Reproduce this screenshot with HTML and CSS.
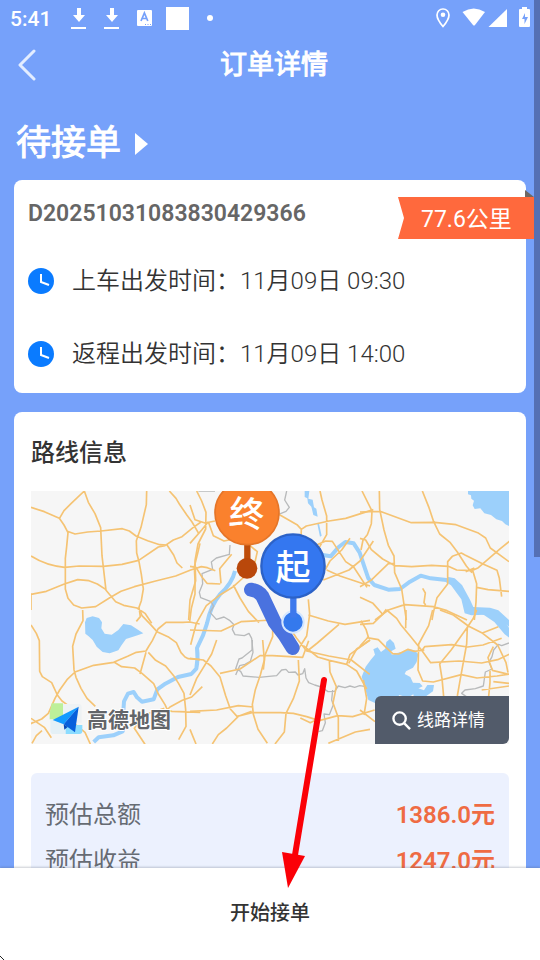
FILE: index.html
```html
<!DOCTYPE html>
<html lang="zh-CN">
<head>
<meta charset="utf-8">
<meta name="viewport" content="width=device-width, initial-scale=1">
<title>订单详情</title>
<link rel="stylesheet" href="styles.css">
</head>
<body>
<div class="app">
  <div class="status-bar">
    <span class="clock">5:41</span>
    <svg class="status-left" viewBox="0 0 146 24" aria-hidden="true">
      <g fill="#fff">
        <path d="M7 1h4v7h4l-6 7-6-7h4zM1 20h15v2H1z"/>
        <path d="M40 1h4v7h4l-6 7-6-7h4zM34 20h15v2H34z"/>
        <rect x="67" y="3" width="15" height="16" rx="1"/>
        <rect x="96" y="0" width="23" height="23"/>
        <circle cx="140" cy="11" r="3"/>
      </g>
      <path d="M71 14l3.400-8 3.400 8M72.300 11.500h4.300" fill="none" stroke="#76a1fa" stroke-width="1.700"/>
      <path d="M75 17.500h1M77.500 17.500h1M80 17.500h1" stroke="#76a1fa"/>
    </svg>
    <svg class="status-right" viewBox="0 0 96 24" aria-hidden="true">
      <path d="M9 2a5.900 5.900 0 0 0-6 6c0 4.500 6 11.500 6 11.500S15 12.500 15 8a5.900 5.900 0 0 0-6-6z" fill="none" stroke="#fff" stroke-width="1.700"/>
      <circle cx="9" cy="7.700" r="2.300" fill="#fff"/>
      <path d="M28.500 5Q39.800-2 51 5L41 18q-1 1-2 0z" fill="#fff"/>
      <path d="M54.500 20L73 2v18z" fill="#fff"/>
      <path d="M88 0h5v2h2q1 0 1 1v16q0 1-1 1H86q-1 0-1-1V3q0-1 1-1h2z" fill="#fff"/>
      <path d="M91 6l-3 6h2.500v5l3.500-7h-3z" fill="#76a1fa"/>
    </svg>
  </div>

  <header class="nav">
    <button class="back" type="button" aria-label="返回">
      <svg viewBox="0 0 20 34" aria-hidden="true"><path d="M18 3L4 17l14 14" fill="none" stroke="#e3edff" stroke-width="3" stroke-linecap="round" stroke-linejoin="round"/></svg>
    </button>
    <h1>订单详情</h1>
  </header>

  <main class="content">
    <h2 class="state">待接单<svg viewBox="0 0 13 22" aria-hidden="true"><path d="M0 0l13 11L0 22z" fill="#fff"/></svg></h2>

    <section class="card order">
      <p class="order-id">D20251031083830429366</p>
      <div class="ribbon">
        <svg viewBox="0 0 136 50" preserveAspectRatio="none" aria-hidden="true">
          <path d="M127 1l9 7h-9z" fill="#6f6864"/>
          <path d="M0 8h136v42H0l6-21z" fill="#ff693d"/>
        </svg>
        <span>77.6公里</span>
      </div>
      <p class="time"><svg viewBox="0 0 26 26" aria-hidden="true"><circle cx="13" cy="13" r="13" fill="#0a7bff"/><path d="M13 6v8l8 3" fill="none" stroke="#fff" stroke-width="2"/></svg>上车出发时间：11月09日 09:30</p>
      <p class="time"><svg viewBox="0 0 26 26" aria-hidden="true"><circle cx="13" cy="13" r="13" fill="#0a7bff"/><path d="M13 6v8l8 3" fill="none" stroke="#fff" stroke-width="2"/></svg>返程出发时间：11月09日 14:00</p>
    </section>

    <section class="card route">
      <h3>路线信息</h3>
      <div class="map">
        <svg class="map-canvas" viewBox="0 0 1434 759" role="img" aria-label="路线地图">
          <rect width="1434" height="759" fill="#f6f6f6"/>
          <!-- lakes and rivers -->
          <g fill="#9cd0fb">
            <g transform="translate(987 -33)">
              <path d="M324 33h126v106l-14-6-10-10-17-5-16-13-20-5-12-15-17 2-6-11 4-14-8-6-1-10-9-3z"/>
              <path d="M262 290l22 5 22 20 24 44 10 22 50 2 25 8 35 32v20l-42-34-34-5-40 2-20-6-10-42-31-42-16-10z"/>
            </g>
            <g transform="translate(987 357)">
              <path d="M5 200l12-30 15-20 13-16-5-16 13-6 10 14 13-10 3-20 11-9 12 12 5 17-16 9 5 9 18-6 21-4 12-6 17 3 11 12-5 23-11 17-21 11-4 8 17 9 8 17 20 1 9 10-12 6-8 12-15 10-15 4-20-6-10 13 13 11H45L25 270z"/>
              <path d="M159 250l14-16 19 7 10-16 20 0-3 19-20 14h-38zM340 0h65l23 25 20 30v28l-14-10-31-37-30-20z"/>
            </g>
            <path transform="translate(-33 357)" d="M195 37l5-13 18-5 19 5 9 13-2 18 10 16 21 3 20-14 15-18 23 4 37 24-17 6-35 11-13 18-10 16-17 6-9 3-21-4-18-16-12-20-13-12-9-7z"/>
            <path transform="translate(477 -33)" d="M344 33h14l-3 23 13 3 4 23 7 4 4 24-13-5-6-25-10-10-2-15-8-4zM382 132l5-1 8 36-5 3z"/>
          </g>
          <g fill="none" stroke="#9cd0fb" stroke-width="12" stroke-linejoin="round">
            <path d="M612 240q-9 38-45 70-27 31-39 87l-12 36-18 38q4 30-2 62l-15 16-40 9-38 20-24 17-11 30-35 7-15-13-10-16-17 5-12 23-2 30 4 31-6 29-28 12-44 6-15 14"/>
            <path d="M875 192l24 4 24-28 20-15 25 4 18 28 14 42 12 35 18 20 42 14 35-2 30-22 32-18 30 8 54 6"/>
          </g>
          <!-- administrative boundaries -->
          <g fill="none" stroke="#b8babb" stroke-width="4" stroke-linejoin="round">
            <path transform="translate(477 -33)" d="M120 195l-2 28-39 11-15 12 4 22-32 13 2 30-10 26 4 16 31 12 8 14-11 18 19 21 23-7 18 11 12 12-5 14 8 16 28 3 14-7 8 15 4 42-8 27-16 9-16 4-12 28M290 33l-6 27 14 22-10 12-22 9M25 33h50"/>
            <path transform="translate(477 447)" d="M187 0l-1 30-30 24-9 3-10 29 15 8 7 14 48 4 53-5 15-17 13-2 8 9 20-1 8 9 14-4 6-15 4 28 8 14 18 7 20 6 20 14 20-1 11-16 20 5 15-5 14 4 15-5 15 2M428 150l-3 30 5 14-12 30-16-2 4 26-9 24-12 3"/>
            <path transform="translate(987 357)" d="M447 99l-22 8-10-4-14 17-5 20-9 17 9 20-20 9-6 42-24 8-31 4-10 10 14 10"/>
          </g>
          <!-- highways -->
          <g fill="none" stroke="#f5c373" stroke-width="5" stroke-linejoin="round">
            <g transform="translate(-33 -33)">
              <path d="M33 82l40 13 45 20 14 20 12 23-4 42-4 35v92l8 28 17 20 24 9 42-4 41-26 35-20 40-14 64-17 60-15 45-18 32-10 18 3 24 9M33 228q46 29 101 34l43-4 73 1 56-6 50-12 59-40 20-4 25-17 26-10 33-27 24-17M193 33l-40 38-21 21-14 24M193 33l12 34 20 34 17 42 4 84 12 104 29 34 24 11 40 8 24 16 20 30M380 33l-1 41-16 68-14 40 1 37 7 26 7 38 6 44-6 35-7 20 4 28-12 14M448 33l20 22 10 17 23 34 15 20 20 34M142 154l23 8 38-6 40-3 64-7 21 7 20 15 35 14 36 12 22 1 20 30 10 24 16 15M33 343l46-9 54-22 40-13 34 3 25 10 26 17M33 340v50M540 190l-7 30-10 40 2 42v40l-11 43-5 40"/>
            </g>
            <g transform="translate(-33 357)">
              <path d="M33 45l16 25 9 22 1 92 8 16 28 18 17 37 14 18 15 11M188 0l1 32-21 40-10 37 4 70 6 23 15 33 18 30 25 24M165 186l-24 23-22 31-14 25-20 45-20 17-33 14M33 325l40 27 21 31M66 362l-17 15-13 23M165 186l56-20 60-9 42-18 26-12 29-4 7-12 12-19 17-35 24-20 50 0 21-1 30 6M360 0l6 17 26 27 19 21 36 17 22 16 14 30 12 13 10 5 35 3M283 157l22 13 39 4 22 16 35 31 14 31 20 32 8 17 13 3 85 3M385 127l22 24 30 17 24 29 15 24 16 29 5 49 1 50-22 40M430 310l20-19 37-20 28-10 32-31M378 127l-18 65M120 330l47 14 28 23 16 35M375 403l-32-48 15-20 30-25 45-15"/>
            </g>
            <g transform="translate(477 -33)">
              <path d="M0 75l15 44 30 10 30-6M20 33l15 30 13 34-1 50-23 45-9 50 2 60-17 58-4 60M0 190l35-40 20-25M55 125l15 42 32 16 49-10 51 42-10 45-30 31-32 29-39 24-42 33-30 53-17 64M0 259l18 3 17 28 16 20 40 2M93 310l-4-44 36-43M130 315l20 39 25 40 32 34M266 103l55 31 13 14 15-10 68-15 50-8 83-26M390 33l6 27 14 48 0 56-19 33-33 42M334 148l-1 26 45 22 29-13 20 1 40 61 24 16 40 61M480 175l-25 35-35 33-14 26M400 300l77-30 33-27 40-60M355 358l4 45-9 65-35 55M410 270l40 18 90 30M355 405l60 18 50 10 75-12M447 433l-65 56-30 24M540 480l-40 27-24 43M0 450l93 3 60-28 95-5 42 10 30 45 30 38 66 15 68 12 55 43M248 420l0 50-23 55-5 44"/>
            </g>
            <g transform="translate(477 447)">
              <path d="M80 0L65 42 20 115 0 165M0 55l40 5 23 18 27 33 17 56 14 40 20 22 45-11 85 0 39 2 40 10 38 12 55-15 45 3 66-20M218 0l5 60-12 45-15 44-9 44 3 30 14 45 28 42M90 100l60-13 60-40 38 0 90 5 18-50M325 60l3 63-18 53-22 44-5 56-28 36M0 214l80-4 65-13 45 4M185 214l-40 15-35 35-25 20-18 28M340 17l43 34 35 10 52 12 30 20 30 54M418 61l2 35 19 44-10 49 16 44 0 70M470 73l10-30 60-43M540 268l-44 8-45 19-36 15M0 268l18 44M373 242l-12 6-30-14"/>
            </g>
            <g transform="translate(987 -33)">
              <path d="M0 96l60-2 94 34 70-1 64 7 65 24 24 16 14 30 56 41M58 33l1 55 13 62 13 46 17 32 2 50 21 49 14 93M6 33l30 60-2 38-12 33-13 16-6 30M0 175l17 5 17 29 34 28 37 20 50 3 60-4 50 3 25 11 45 2 20-9 66-57 41-33M187 33l20 50 14 42 18 37 32 26 21 28 27 42 17 20M317 275l26-11M263 262v-17l14-16 27-10 11 6 54 27 42 19 7 24 7 55M105 251l-20 0-52 50L0 320M337 268l13 43-2 55-5 54M350 322l34 7 63 5M0 352l39 18 31 35M45 420l40-30 49-16 86 6 41 12 60 28M263 262l0 50-32 41-11 45-4 22M188 325l8 14-4 29 5 7"/>
            </g>
            <g transform="translate(987 357)">
              <path d="M0 43l40-3 27-26 12-16M0 108l25-27-7-23-15-26M20 83l35 6 23 23 20 19 18 1 28-14 19 6 30-4M80 0l30 25 13 20 30 36 32 40 27 37 85-5 68 6 48-10 43-20M138 0l-1 55M218 0l-12 47-30 55-2 78 14 33 32 3 84-22 47 10 60-6 52-8M187 120l7-10 81-6 48 7 46-6 56-20M240 0l40 15 45 33 43 22 45 35 25 53 6 30M350 0l-10 25-20 30-46 64-35 43 7 43 5 55M322 50l-2 52-20 110-8 46M365 70l50-20M390 182v35l-4 42M365 240l82-12M400 110l-16 33 13 38 50 12M0 300l45 35M10 210l10 55-8 50M400 215l47 5"/>
            </g>
          </g>
          <!-- planned route -->
          <path d="M660 296q24 4 34 20l37 78 30 39 24 38" fill="none" stroke="#4a72df" stroke-width="42" stroke-linecap="round" stroke-linejoin="round"/>
          <!-- destination pin -->
          <g>
            <path d="M649 155v65" stroke="#be4d0b" stroke-width="19"/>
            <circle cx="648" cy="232" r="31" fill="#b9480b"/>
            <circle cx="648" cy="65" r="96" fill="#fa812d" stroke="#e57528" stroke-width="5"/>
            <text class="pin-text" x="648" y="106" transform="rotate(5 648 65)">终</text>
          </g>
          <!-- departure pin -->
          <g>
            <circle cx="786" cy="393" r="32" fill="#3479ed" stroke="#d5e7ff" stroke-width="6"/>
            <path d="M787 310v70" stroke="#3d78ec" stroke-width="19"/>
            <circle cx="786" cy="225" r="95" fill="#3477f0" stroke="#2c62c7" stroke-width="7"/>
            <text class="pin-text" x="786" y="267">起</text>
          </g>
          <!-- map provider mark -->
          <path d="M62 637h34v48H56v-18z" fill="#bdf09a"/>
          <path d="M96 639h46q10 0 10 10v46H96z" fill="#eef2f4"/>
          <path d="M58 687h46v42H68q-10 0-10-10z" fill="#e4f0f6"/>
          <path d="M104 702h50v18q0 9-9 9h-41z" fill="#8bdcff"/>
          <path d="M143 647L65 687l33 13z" fill="#149bff"/>
          <path d="M143 647L98 700l34 24z" fill="#075fdc"/>
          <path d="M98 700l2 16 10-8z" fill="#0748b6"/>
          <text class="map-brand" x="168" y="707">高德地图</text>
        </svg>
        <button class="map-detail" type="button"><svg viewBox="0 0 20 20" aria-hidden="true"><circle cx="8" cy="8" r="6.500" fill="none" stroke="#fff" stroke-width="2.500"/><path d="M13 13l6 6" stroke="#fff" stroke-width="2.500"/></svg>线路详情</button>
      </div>

      <dl class="fees">
        <div><dt>预估总额</dt><dd>1386.0元</dd></div>
        <div><dt>预估收益</dt><dd>1247.0元</dd></div>
      </dl>
    </section>
  </main>

  <footer class="action-bar">
    <button class="accept" type="button">开始接单</button>
    <svg class="arrow" viewBox="0 0 46 214" aria-hidden="true">
      <path d="M43 5L14 180" stroke="#fb0007" stroke-width="6" stroke-linecap="round"/>
      <path d="M1 177l23 4L7 213z" fill="#fb0007"/>
    </svg>
    <svg class="corner" viewBox="0 0 4 4" aria-hidden="true"><path d="M0 0h1v1H0zM1 1h1v1H1zM2 2h1v1H2zM3 3h1v1H3z" fill="#222"/></svg>
  </footer>
  <div class="scroll-thumb"></div>
</div>
</body>
</html>
```

FILE: styles.css
```css
* { box-sizing: border-box; }

body, h1, h2, h3, p, dl, dd { margin: 0; }

body {
  font-family: Roboto, "Noto Sans CJK SC", sans-serif;
  color: #333;
  background: #76a1fa;
}

button {
  padding: 0;
  border: 0;
  background: none;
  font-family: inherit;
  color: inherit;
}

svg { display: block; flex: none; }

.app {
  position: relative;
  display: flex;
  flex-direction: column;
  height: 100vh;
  overflow: hidden;
}

.status-bar {
  display: flex;
  align-items: center;
  height: 38px;
  padding: 0 10px;
  color: #fff;
}
.clock { width: 60px; font-size: 21px; line-height: 24px; font-weight: 500; }
.status-left { width: 146px; height: 24px; }
.status-right { width: 96px; height: 24px; margin-left: auto; }

.nav {
  display: grid;
  grid-template-columns: 40px 1fr 32px;
  align-items: center;
  height: 54px;
  padding: 0 16px;
  color: #fff;
}
.back svg { width: 20px; height: 34px; }
.nav h1 {
  font-size: 27px;
  line-height: 36px;
  font-weight: 400;
  text-align: center;
  -webkit-text-stroke: 1px #fff;
}

.content {
  flex: 1;
  min-height: 0;
  overflow: hidden;
  padding: 28px 14px 0;
}

.state {
  display: flex;
  align-items: center;
  gap: 14px;
  padding: 0 2px;
  margin-bottom: 12px;
  font-size: 35px;
  line-height: 48px;
  font-weight: 400;
  color: #fff;
  -webkit-text-stroke: 1px #fff;
}
.state svg { width: 13px; height: 22px; }

.card {
  position: relative;
  border-radius: 8px;
  background: #fff;
}

.order {
  display: flex;
  flex-direction: column;
  gap: 41px;
  padding: 18px 14px 23px;
  margin-bottom: 19px;
}
.order-id { font-size: 23px; line-height: 32px; font-weight: 600; color: #666; margin-bottom: -6px; }
.time {
  display: flex;
  align-items: center;
  gap: 18px;
  font-size: 24px;
  line-height: 32px;
  font-weight: 350;
}
.time svg { width: 26px; height: 26px; }

.ribbon {
  position: absolute;
  top: 9px;
  right: -8px;
  width: 136px;
  height: 50px;
  padding: 15px 22px 0 23px;
  font-size: 23px;
  line-height: 32px;
  color: #fff;
  white-space: nowrap;
}
.ribbon svg { position: absolute; inset: 0; width: 100%; height: 100%; }
.ribbon span { position: relative; }

.route { padding: 25px 17px; }
.route h3 { margin-bottom: 22px; font-size: 24px; line-height: 32px; font-weight: 500; }

.map { position: relative; overflow: hidden; }
.map-canvas { width: 100%; height: auto; }
.pin-text {
  font-size: 105px;
  font-weight: 500;
  text-anchor: middle;
  fill: #fff;
}
.map-brand {
  font-size: 63px;
  font-weight: 700;
  fill: #626569;
  stroke: #fff;
  stroke-width: 6px;
  paint-order: stroke;
}
.map-detail {
  position: absolute;
  right: 0;
  bottom: 0;
  display: flex;
  align-items: center;
  gap: 6px;
  height: 48px;
  padding: 0 24px 0 17px;
  border-radius: 6px 0;
  background: #525b6a;
  color: #fff;
  font-size: 17px;
  line-height: 24px;
}
.map-detail svg { width: 19px; height: 19px; }

.fees {
  display: flex;
  flex-direction: column;
  gap: 14px;
  margin-top: 29px;
  padding: 26px 14px;
  border-radius: 6px;
  background: #ecf1fe;
  font-size: 24px;
  line-height: 32px;
}
.fees div { display: flex; justify-content: space-between; }
.fees dt { color: #666b73; }
.fees dd { font-weight: 600; color: #ef6b43; }

.action-bar {
  position: relative;
  flex: none;
  background: #fff;
  box-shadow: 0 -1px 2px rgba(80, 90, 110, 0.3);
}
.accept {
  display: block;
  width: 100%;
  padding: 31px 0 33px;
  font-size: 20px;
  line-height: 28px;
  font-weight: 500;
}
.arrow {
  position: absolute;
  left: 52%;
  bottom: 71px;
  width: 46px;
  height: 214px;
  pointer-events: none;
}
.corner { position: absolute; left: 0; bottom: 0; width: 4px; height: 4px; }

.scroll-thumb {
  position: absolute;
  top: 0;
  right: 0;
  width: 6px;
  height: 58%;
  background: #5570b4;
}
```
